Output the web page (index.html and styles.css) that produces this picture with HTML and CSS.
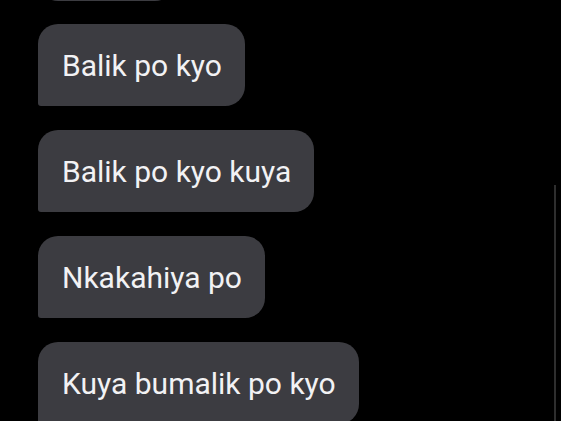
FILE: index.html
```html
<!DOCTYPE html>
<html lang="en">
<head>
  <meta charset="UTF-8" />
  <meta name="viewport" content="width=device-width, initial-scale=1.0"/>
  <title>Messages</title>
  <link rel="stylesheet" href="styles.css">
</head>
<body>

  <div class="thread">
    <div class="messages">
      <!-- previous message, scrolled mostly out of view -->
      <div class="bubble bubble-prev"></div>
      <div class="bubble">Balik po kyo</div>
      <div class="bubble">Balik po kyo kuya</div>
      <div class="bubble">Nkakahiya po</div>
      <div class="bubble">Kuya bumalik po kyo</div>
    </div>

    <!-- scroll thumb -->
    <div class="scrollbar"></div>
  </div>

</body>
</html>
```

FILE: styles.css
```css
html, body {
  margin: 0;
  padding: 0;
  background: #000;
  height: 100%;
  overflow: hidden;
}

body {
  font-family: Roboto, "Noto Sans", sans-serif;
  color: #f2f2f4;
}

.thread {
  position: relative;
  height: 421px;
  overflow: hidden;
}

.messages {
  display: flex;
  flex-direction: column;
  align-items: flex-start;
  gap: 24px;
  padding-left: 38px;
  margin-top: -81px;
}

.bubble {
  background: #3c3c41;
  border-radius: 20px 20px 20px 3px;
  height: 82px;
  box-sizing: border-box;
  padding: 0 23px 0 24px;
  display: flex;
  align-items: center;
  font-size: 30px;
}

.bubble-prev {
  width: 137px;
  border-radius: 20px;
  margin-bottom: -1px;
}

.scrollbar {
  position: absolute;
  right: 5px;
  top: 185px;
  width: 2px;
  height: 240px;
  background: #2e2e2e;
}
```
